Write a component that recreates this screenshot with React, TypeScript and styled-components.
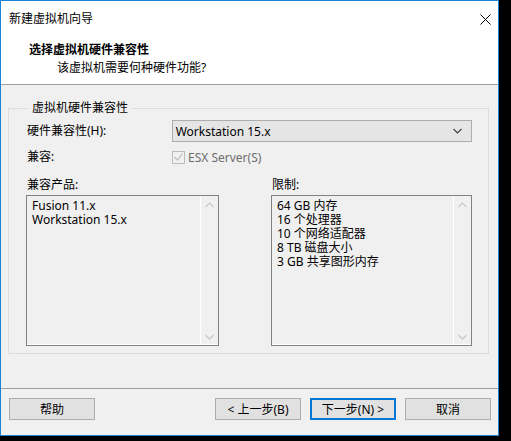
import React from "react"
import styled, { createGlobalStyle } from "styled-components"

const GlobalStyle = createGlobalStyle`
    html, body {
        margin: 0;
        padding: 0;
        background: #000;
    }
    body {
        font-family: "Noto Sans", "Noto Sans CJK SC", sans-serif;
        font-size: 12px;
        color: #000;
    }
`

const StyledWindow = styled.div`
    box-sizing: border-box;
    width: 499px;
    height: 436px;
    border: 1px solid #1883d7;
    background: #f0f0f0;
    display: flex;
    flex-direction: column;
`

const StyledHeader = styled.div`
    background: #fff;
    height: 89px;
    border-bottom: 1px solid #a0a0a0;
    display: flex;
    flex-direction: column;
`

const StyledTitleBar = styled.div`
    height: 36px;
    display: flex;
    align-items: center;
    justify-content: space-between;
    padding: 0 4px 0 8px;
    line-height: 16px;
`

const StyledClose = styled.div`
    width: 18px;
    height: 18px;
    display: flex;
    align-items: center;
    justify-content: center;
`

const StyledHeading = styled.div`
    margin: 4px 0 0 28px;
    font-weight: bold;
    line-height: 18px;
`

const StyledSubhead = styled.div`
    margin: 0 0 0 56px;
    line-height: 18px;
`

const StyledBody = styled.div`
    flex: 1;
    padding: 15px 9px 0 7px;
`

const StyledGroup = styled.fieldset`
    box-sizing: border-box;
    margin: 0;
    height: 254px;
    border: 1px solid #dcdcdc;
    padding: 4px 16px 0 17px;
    min-width: 0;
    legend {
        margin-left: 3px;
        padding: 0 4px 0 3px;
        line-height: 16px;
    }
`

const StyledRow = styled.div`
    display: flex;
    align-items: center;
    height: 22px;
    margin-bottom: 4px;
`

const StyledLabel = styled.div`
    width: 145px;
    padding-left: 1px;
    line-height: 16px;
`

const StyledSelect = styled.div`
    box-sizing: border-box;
    width: 301px;
    height: 22px;
    background: #e5e5e5;
    border: 1px solid #adadad;
    display: flex;
    align-items: center;
    justify-content: space-between;
    padding: 0 9px 0 3px;
`

const StyledCheck = styled.div`
    display: flex;
    align-items: center;
    color: #6d6d6d;
    gap: 3px;
`

const StyledBox = styled.div`
    box-sizing: border-box;
    width: 13px;
    height: 13px;
    border: 1px solid #bcbcbc;
    display: flex;
    align-items: center;
    justify-content: center;
`

const StyledColumns = styled.div`
    display: flex;
    justify-content: space-between;
    margin-top: 9px;
`

const StyledColumn = styled.div<{ $width: number }>`
    width: ${({ $width }) => $width}px;
    display: flex;
    flex-direction: column;
`

const StyledListLabel = styled.div`
    padding-left: 1px;
    line-height: 16px;
    margin-bottom: 2px;
`

const StyledList = styled.div`
    box-sizing: border-box;
    height: 151px;
    border: 1px solid #828282;
    display: flex;
    box-shadow: inset 0 -1px 0 #fff;
`

const StyledItems = styled.div`
    flex: 1;
    padding: 3px 0 0 5px;
`

const StyledItem = styled.div`
    height: 14px;
    line-height: 14px;
    white-space: nowrap;
`

const StyledScroll = styled.div`
    width: 17px;
    border-left: 1px solid #fff;
    display: flex;
    flex-direction: column;
    justify-content: space-between;
    align-items: center;
    padding: 6px 0 5px;
`

const StyledFooter = styled.div`
    border-top: 1px solid #a0a0a0;
    height: 39px;
    margin-top: 34px;
    display: flex;
    align-items: flex-start;
    padding: 9px 7px 0 8px;
    gap: 9px;
`

const StyledButton = styled.div<{ $primary?: boolean }>`
    box-sizing: border-box;
    width: 86px;
    height: 22px;
    background: #e1e1e1;
    border: ${({ $primary }) => ($primary ? "2px solid #0078d7" : "1px solid #adadad")};
    display: flex;
    align-items: center;
    justify-content: center;
`

const StyledSpacer = styled.div`
    flex: 1;
`

const Chevron = ({ up, color }: { up?: boolean; color: string }) => (
    <svg width="9" height="6" viewBox="0 0 9 6">
        <polyline
            points={up ? "0.5,5 4.5,1 8.5,5" : "0.5,1 4.5,5 8.5,1"}
            fill="none"
            stroke={color}
            strokeWidth="1.1"
        />
    </svg>
)

const ScrollBar = () => (
    <StyledScroll>
        <Chevron up color="#c6c6c6" />
        <Chevron color="#c6c6c6" />
    </StyledScroll>
)

const products = ["Fusion 11.x", "Workstation 15.x"]
const limits = ["64 GB 内存", "16 个处理器", "10 个网络适配器", "8 TB 磁盘大小", "3 GB 共享图形内存"]

const App: React.FC = () => {
    return (
        <>
            <GlobalStyle />
            <StyledWindow>
                <StyledHeader>
                    <StyledTitleBar>
                        <span>新建虚拟机向导</span>
                        <StyledClose>
                            <svg width="11" height="11" viewBox="0 0 11 11">
                                <path d="M0.5 0.5 L10.5 10.5 M10.5 0.5 L0.5 10.5" stroke="#000" strokeWidth="1" />
                            </svg>
                        </StyledClose>
                    </StyledTitleBar>
                    <StyledHeading>选择虚拟机硬件兼容性</StyledHeading>
                    <StyledSubhead>该虚拟机需要何种硬件功能?</StyledSubhead>
                </StyledHeader>
                <StyledBody>
                    <StyledGroup>
                        <legend>虚拟机硬件兼容性</legend>
                        <StyledRow>
                            <StyledLabel>硬件兼容性(H):</StyledLabel>
                            <StyledSelect>
                                <span>Workstation 15.x</span>
                                <Chevron color="#404040" />
                            </StyledSelect>
                        </StyledRow>
                        <StyledRow>
                            <StyledLabel>兼容:</StyledLabel>
                            <StyledCheck>
                                <StyledBox>
                                    <svg width="9" height="8" viewBox="0 0 9 8">
                                        <polyline points="0.5,4 3.5,7 8.5,0.5" fill="none" stroke="#bcbcbc" strokeWidth="1.2" />
                                    </svg>
                                </StyledBox>
                                <span>ESX Server(S)</span>
                            </StyledCheck>
                        </StyledRow>
                        <StyledColumns>
                            <StyledColumn $width={193}>
                                <StyledListLabel>兼容产品:</StyledListLabel>
                                <StyledList>
                                    <StyledItems>
                                        {products.map((p) => <StyledItem key={p}>{p}</StyledItem>)}
                                    </StyledItems>
                                    <ScrollBar />
                                </StyledList>
                            </StyledColumn>
                            <StyledColumn $width={201}>
                                <StyledListLabel>限制:</StyledListLabel>
                                <StyledList>
                                    <StyledItems>
                                        {limits.map((l) => <StyledItem key={l}>{l}</StyledItem>)}
                                    </StyledItems>
                                    <ScrollBar />
                                </StyledList>
                            </StyledColumn>
                        </StyledColumns>
                    </StyledGroup>
                </StyledBody>
                <StyledFooter>
                    <StyledButton>帮助</StyledButton>
                    <StyledSpacer />
                    <StyledButton>&lt; 上一步(B)</StyledButton>
                    <StyledButton $primary>下一步(N) &gt;</StyledButton>
                    <StyledButton>取消</StyledButton>
                </StyledFooter>
            </StyledWindow>
        </>
    )
}

export default App
